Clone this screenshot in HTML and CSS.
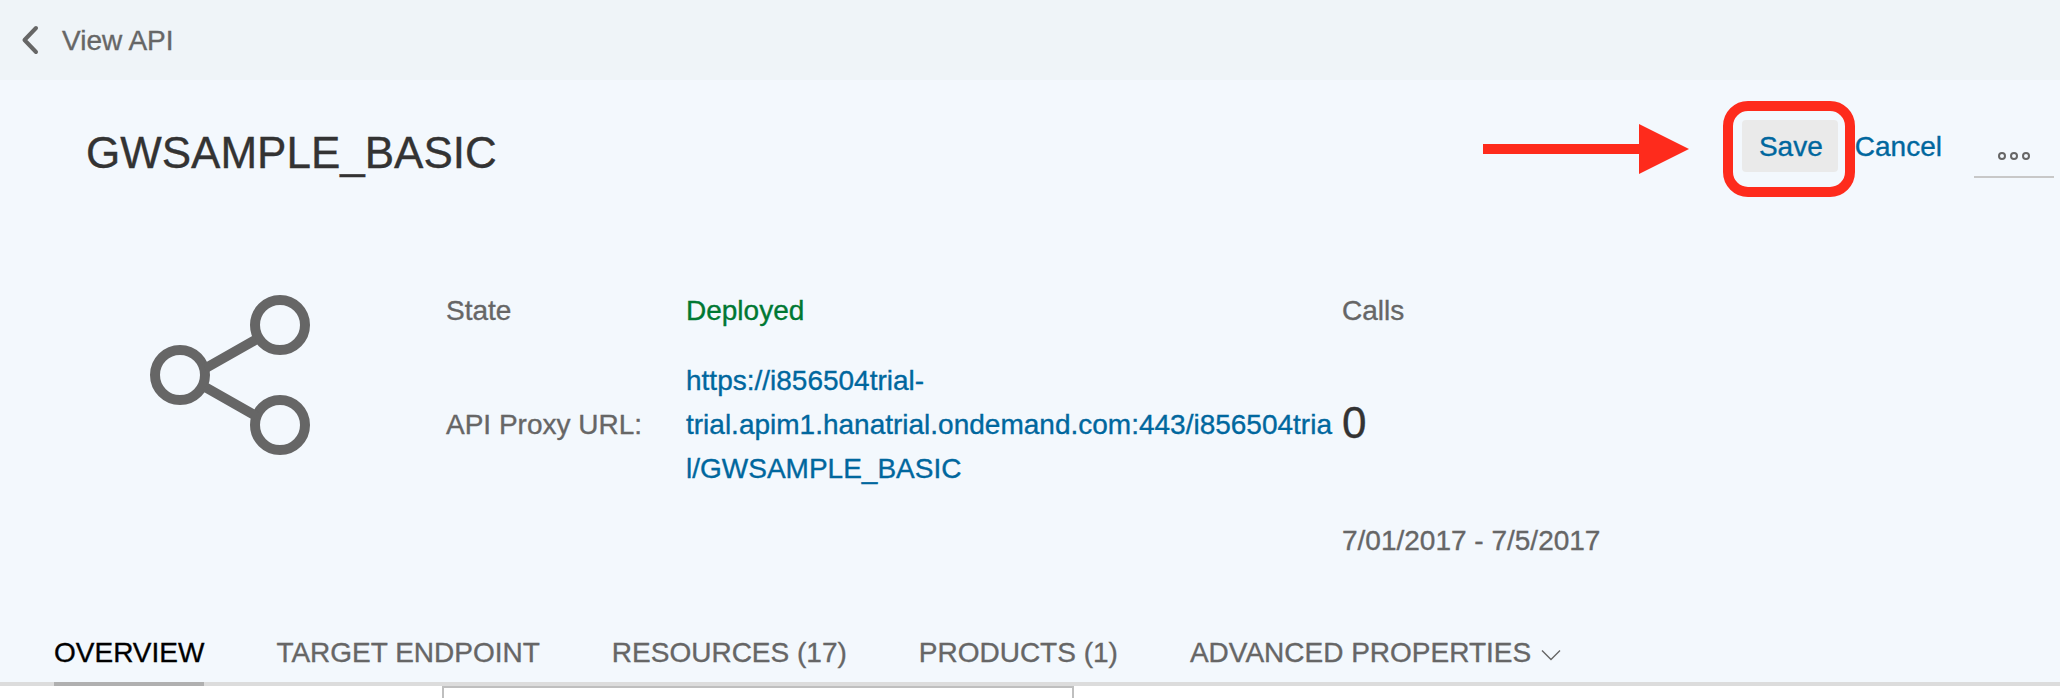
FILE: index.html
```html
<!DOCTYPE html>
<html lang="en">
<head>
<meta charset="utf-8">
<title>View API</title>
<link rel="stylesheet" href="styles.css">
</head>
<body>
<div class="page">
  <header class="topbar">
    <svg class="back" width="20" height="32" viewBox="0 0 20 32"><path d="M16 4 L4.500 16 L16 28"/></svg>
    <span class="crumb">View API</span>
  </header>

  <section class="object">
    <div class="title-row">
      <h1 class="title">GWSAMPLE_BASIC</h1>
      <div class="actions">
        <svg class="arrow" width="206" height="50" viewBox="0 0 206 50"><path d="M0 20H156V0L206 25L156 50V30H0Z"/></svg>
        <button class="btn save">Save<span class="highlight"></span></button>
        <button class="btn cancel">Cancel</button>
        <button class="more" aria-label="More">
          <svg width="34" height="12" viewBox="0 0 34 12"><circle cx="5" cy="6" r="3"/><circle cx="17" cy="6" r="3"/><circle cx="29" cy="6" r="3"/></svg>
        </button>
      </div>
    </div>

    <div class="details">
      <svg class="share" width="160" height="130" viewBox="0 0 160 130">
        <circle cx="30" cy="80" r="25"/><circle cx="130" cy="30" r="25"/><circle cx="130" cy="130" r="25"/>
        <path d="M55 73.500L106 44.500M55 92L106 121"/>
      </svg>
      <dl class="fields">
        <dt>State</dt>
        <dd class="deployed">Deployed</dd>
        <dt>API Proxy URL:</dt>
        <dd><a class="link">https://i856504trial-<br>trial.apim1.hanatrial.ondemand.com:443/i856504tria<br>l/GWSAMPLE_BASIC</a></dd>
      </dl>
      <div class="calls">
        <div>Calls</div>
        <div class="count">0</div>
        <div>7/01/2017 - 7/5/2017</div>
      </div>
    </div>

    <nav class="tabs">
      <a class="tab active">OVERVIEW</a>
      <a class="tab">TARGET ENDPOINT</a>
      <a class="tab">RESOURCES (17)</a>
      <a class="tab">PRODUCTS (1)</a>
      <a class="tab">ADVANCED PROPERTIES<svg class="caret" width="20" height="12" viewBox="0 0 20 12"><path d="M1 1.500L10 10.500L19 1.500"/></svg></a>
    </nav>
  </section>

  <main class="content"><div class="field-box"></div></main>
</div>
</body>
</html>
```
FILE: styles.css
```css
* { box-sizing: border-box; }

body {
  margin: 0;
  font-family: "Liberation Sans", Arial, sans-serif;
  font-size: 28px;
  line-height: 44px;
  color: #666;
  -webkit-text-stroke: 0.35px currentColor;
}

.page {
  display: flex;
  flex-direction: column;
  height: 698px;
  overflow: hidden;
  background: #fff;
}

.topbar {
  display: flex;
  align-items: center;
  flex: none;
  height: 80px;
  padding-left: 20px;
  gap: 22px;
  background: #eff4f8;
}

.crumb { padding-top: 2px; }

.back path {
  fill: none;
  stroke: #666;
  stroke-width: 4;
  stroke-linecap: round;
  stroke-linejoin: round;
}

.object {
  flex: none;
  display: flex;
  flex-direction: column;
  height: 606px;
  background: #f3f8fd;
}

.title-row {
  display: flex;
  justify-content: space-between;
  height: 208px;
  padding: 40px 6px 0 86px;
}

.title {
  margin: 3px 0 0;
  font-size: 44px;
  font-weight: 400;
  line-height: 60px;
  color: #333;
}

.actions { display: flex; align-items: flex-start; }

.arrow { margin: 4px 53px 0 0; fill: #fe2b1c; }

.btn {
  position: relative;
  height: 52px;
  padding: 2px 15px 0 17px;
  border: 0;
  border-radius: 4px;
  background: none;
  font: inherit;
  color: #00679e;
  -webkit-text-stroke: inherit;
}

.save { width: 96px; background: #eaeaea; }
.cancel { padding: 2px 0 0; margin: 0 32px 0 17px; }

/* Ring drawn around the Save button */
.highlight {
  position: absolute;
  inset: -19px -17px -25px -19px;
  border: 10px solid #fe2b1c;
  border-radius: 25px;
}

.more {
  display: flex;
  justify-content: center;
  width: 80px;
  height: 58px;
  padding: 30px 0 0;
  border: 0;
  border-bottom: 2px solid #c8c8c8;
  background: none;
}

.more circle { fill: none; stroke: #666; stroke-width: 2; }

.details {
  display: flex;
  align-items: flex-start;
  height: 342px;
  padding: 1px 0 0 150px;
}

.share {
  flex: none;
  margin: 6px 136px 0 0;
  overflow: visible;
  fill: none;
  stroke: #666;
  stroke-width: 10;
}

.fields {
  display: grid;
  grid-template-columns: 240px 656px;
  row-gap: 26px;
  align-items: center;
  margin: 0;
}

.fields dd { margin: 0; white-space: nowrap; }
.deployed { color: #007833; }
.link { color: #00679e; }

.calls { display: flex; flex-direction: column; }

.count {
  margin: 60px 0 66px;
  font-size: 44px;
  line-height: 60px;
  color: #333;
}

.tabs {
  display: flex;
  gap: 72px;
  height: 56px;
  padding-left: 54px;
  border-bottom: 4px solid #dcdcdc;
}

.tab {
  display: flex;
  align-items: center;
  height: 56px;
  padding-bottom: 10px;
  white-space: nowrap;
}

.active {
  color: #000;
  padding-bottom: 6px;
  border-bottom: 4px solid #b0b0b0;
}

.caret { margin: 4px 0 0 10px; fill: none; stroke: #666; stroke-width: 1.400; }

.content { flex: 1; padding-left: 442px; }

.field-box {
  width: 632px;
  height: 60px;
  border: 2px solid #bfbfbf;
}
```
